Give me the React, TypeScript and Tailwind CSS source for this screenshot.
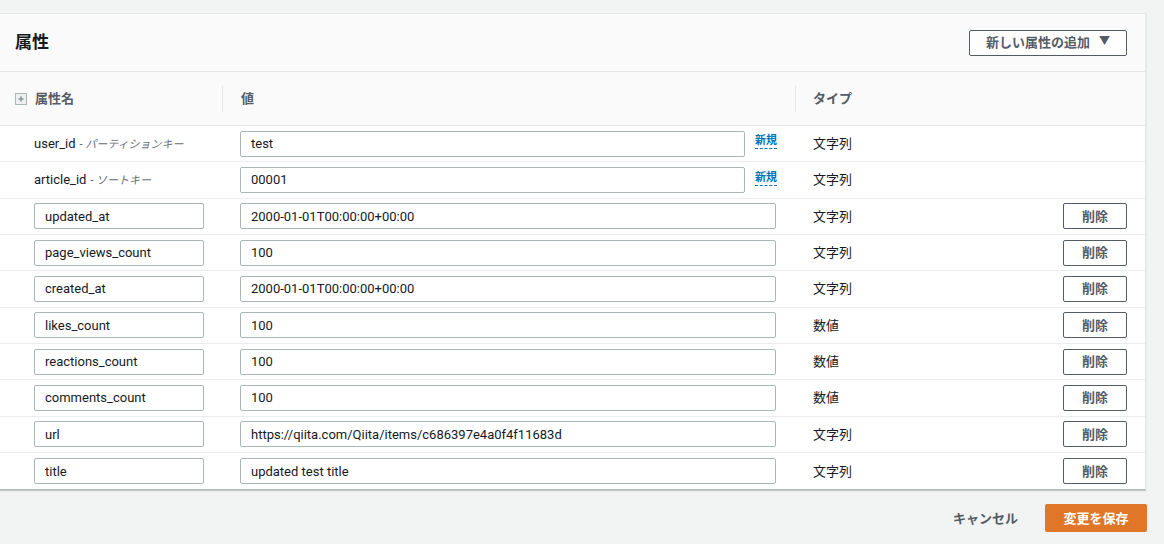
import React from 'react';

const font = { fontFamily: 'Roboto, "Noto Sans CJK JP", sans-serif' };

type Row = { name: string; value: string; type: string; key?: string };

const keyRows: Row[] = [
  { name: 'user_id', key: 'パーティションキー', value: 'test', type: '文字列' },
  { name: 'article_id', key: 'ソートキー', value: '00001', type: '文字列' },
];

const rows: Row[] = [
  { name: 'updated_at', value: '2000-01-01T00:00:00+00:00', type: '文字列' },
  { name: 'page_views_count', value: '100', type: '文字列' },
  { name: 'created_at', value: '2000-01-01T00:00:00+00:00', type: '文字列' },
  { name: 'likes_count', value: '100', type: '数値' },
  { name: 'reactions_count', value: '100', type: '数値' },
  { name: 'comments_count', value: '100', type: '数値' },
  { name: 'url', value: 'https://qiita.com/Qiita/items/c686397e4a0f4f11683d', type: '文字列' },
  { name: 'title', value: 'updated test title', type: '文字列' },
];

const Field = ({ value, className }: { value: string; className: string }) => (
  <div className={`h-[26px] border border-[#aab7b8] rounded-[2px] bg-white flex items-center px-[10px] text-[13px] text-[#16191f] ${className}`}>
    {value}
  </div>
);

export default function App() {
  return (
    <div className="w-[1164px] h-[544px] bg-[#f2f3f3] pt-[13px] overflow-hidden" style={font}>
      <div className="w-[1146px] bg-white border-t border-r border-[#e4e7e7] border-b border-b-[#b4bcbc] shadow-[0_1px_1px_0_rgba(0,28,36,0.2)]">
        {/* header */}
        <div className="h-[58px] bg-[#fafafa] border-b border-[#e4e7e7] flex items-center justify-between pl-[15px] pr-[18px]">
          <h2 className="text-[17px] font-bold text-[#16191f]">属性</h2>
          <button className="h-[26px] w-[158px] border border-[#545b64] rounded-[2px] bg-white flex items-center justify-center gap-[9px] text-[13px] font-bold text-[#545b64]">
            新しい属性の追加
            <span className="text-[11px] text-[#545b64]">▼</span>
          </button>
        </div>

        {/* column headers */}
        <div className="h-[54px] bg-[#fafafa] border-b border-[#e4e7e7] grid grid-cols-[222px_573px_1fr] items-center text-[13px] font-bold text-[#545b64]">
          <div className="flex items-center pl-[15px] gap-[8px]">
            <span className="w-[12px] h-[12px] border border-[#aab7b8] bg-[#eef0f0] flex items-center justify-center">
              <svg width="8" height="8" viewBox="0 0 8 8">
                <path d="M4 1.5v5M1.5 4h5" stroke="#879596" strokeWidth="1.6" />
              </svg>
            </span>
            属性名
          </div>
          <div className="h-[26px] border-l border-[#e4e7e7] flex items-center pl-[18px]">値</div>
          <div className="h-[26px] border-l border-[#e4e7e7] flex items-center pl-[17px]">タイプ</div>
        </div>

        {keyRows.map(r => (
          <div key={r.name} className="h-[36.35px] border-b border-[#eaeded] grid grid-cols-[222px_573px_1fr] items-center text-[13px] text-[#16191f]">
            <div className="pl-[34px] flex items-baseline gap-[4px]">
              <span>{r.name}</span>
              <span className="text-[11px] text-[#687078] italic">- {r.key}</span>
            </div>
            <div className="pl-[18px] flex items-center">
              <Field value={r.value} className="w-[505px]" />
              <span className="ml-[10px] mb-[4px] text-[11px] font-bold text-[#0073bb] border-b border-dashed border-[#0073bb] leading-[14px]">新規</span>
            </div>
            <div className="pl-[18px]">{r.type}</div>
          </div>
        ))}

        {rows.map((r, i) => (
          <div
            key={r.name}
            className={`h-[36.35px] grid grid-cols-[222px_573px_1fr] items-center text-[13px] text-[#16191f] ${i < rows.length - 1 ? 'border-b border-[#eaeded]' : ''}`}
          >
            <div className="pl-[34px]">
              <Field value={r.name} className="w-[170px]" />
            </div>
            <div className="pl-[18px]">
              <Field value={r.value} className="w-[536px]" />
            </div>
            <div className="pl-[18px] pr-[18px] flex items-center justify-between">
              <span>{r.type}</span>
              <button className="h-[26px] w-[64px] border border-[#545b64] rounded-[2px] bg-white text-[13px] font-bold text-[#545b64]">
                削除
              </button>
            </div>
          </div>
        ))}
      </div>

      {/* footer */}
      <div className="w-[1147px] flex items-center justify-end gap-[27px] mt-[14px]">
        <button className="text-[13px] font-bold text-[#545b64]">キャンセル</button>
        <button className="h-[28px] w-[102px] bg-[#e07628] rounded-[2px] text-[13px] font-bold text-white">
          変更を保存
        </button>
      </div>
    </div>
  );
}
